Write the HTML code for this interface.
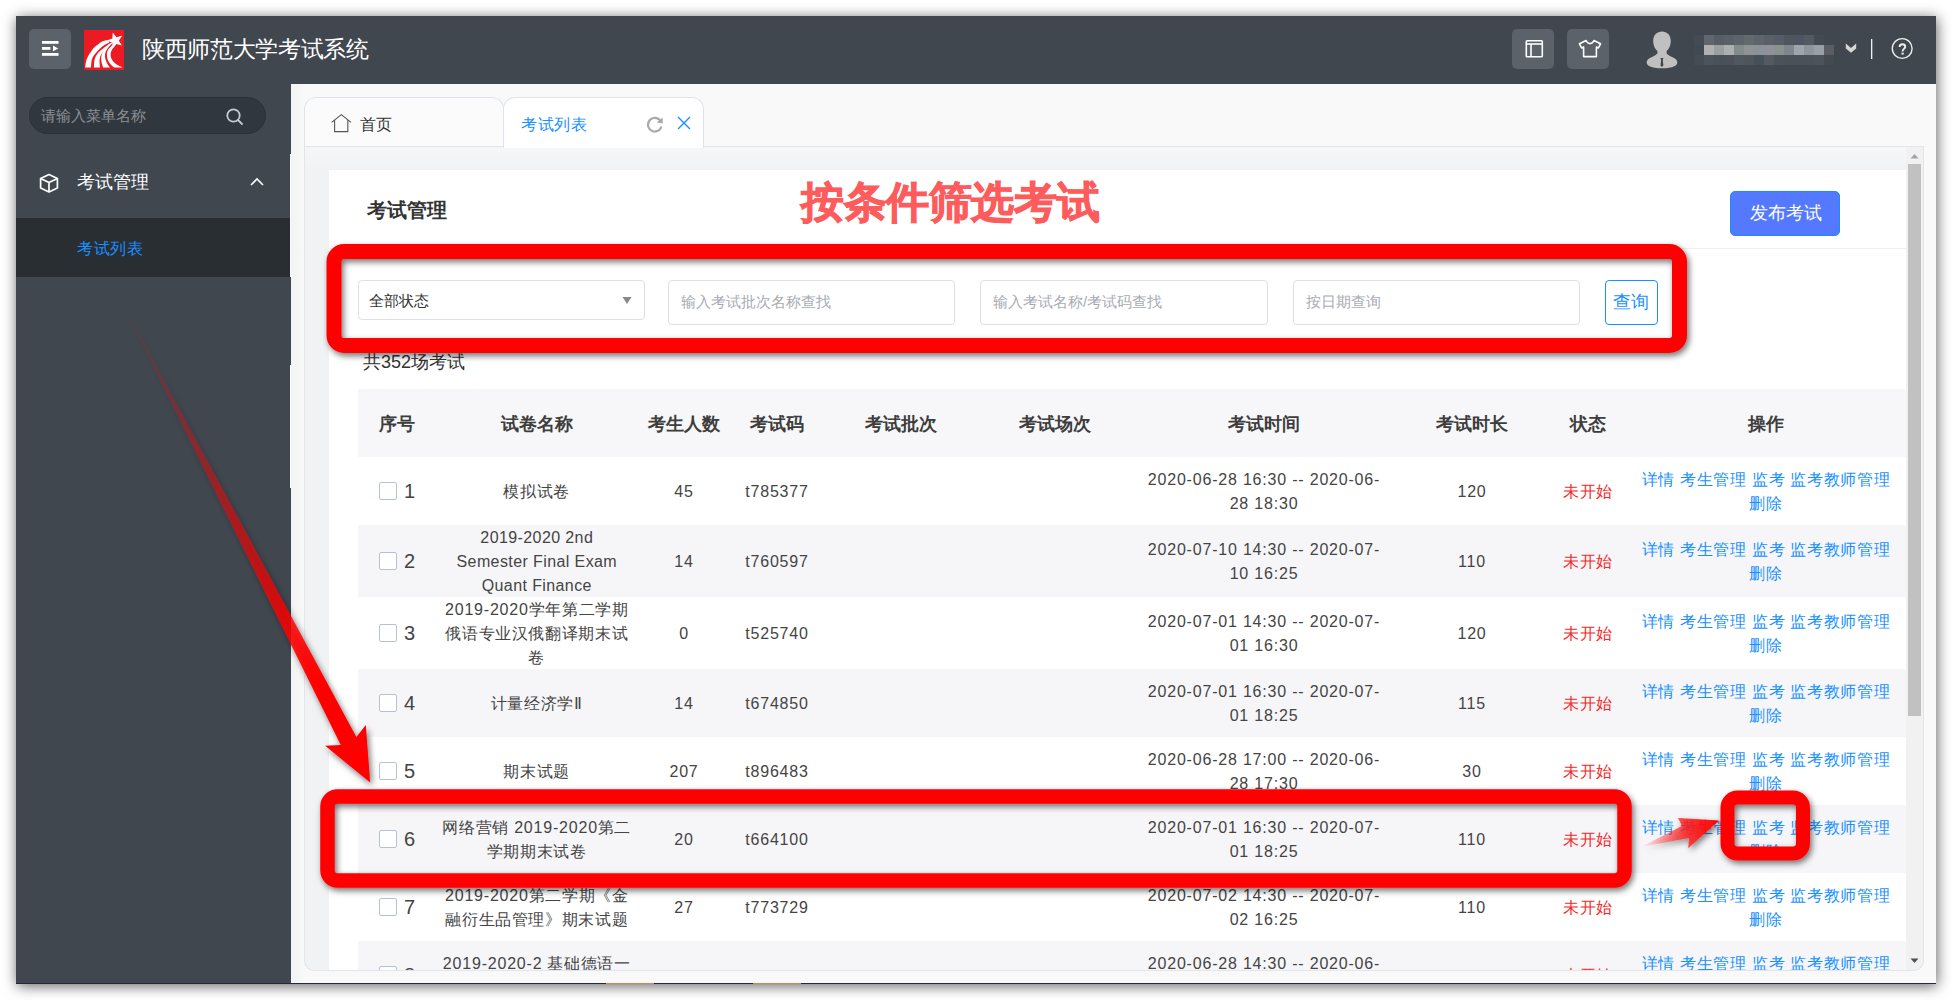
<!DOCTYPE html><html><head><meta charset="utf-8"><title>考试列表</title><style>
*{box-sizing:border-box}
html,body{margin:0;padding:0}
body{width:1952px;height:1000px;background:#fff;position:relative;overflow:hidden;font-family:"Liberation Sans",sans-serif;color:#333}
.a{position:absolute}
#win{left:16px;top:16px;width:1920px;height:968px;background:#f9f9fa;box-shadow:1px 2px 13px rgba(0,0,0,.62)}
#hdr{left:16px;top:16px;width:1920px;height:68px;background:#40474f}
#side{left:16px;top:84px;width:274px;height:899px;background:#40474f}
.hbtn{background:#5b626a;border-radius:5px;width:42px;height:40px;top:29px}
.ttl{left:142px;top:31px;font-size:23px;letter-spacing:-.35px;color:#fff;line-height:36px;white-space:nowrap}
.srch{left:29px;top:97px;width:237px;height:37px;border-radius:19px;background:#31373e;border:1px solid #2c3137}
.ph{color:#8a8f95;font-size:15px;white-space:nowrap}
.tabbox{left:304px;top:146px;width:1620px;height:825px;background:linear-gradient(#f6f7f8,#f1f2f4 26px);border:1px solid #e2e5ec;border-top:none;border-radius:0 0 10px 10px}
.tab{top:97px;height:50px;border:1px solid #dfe3ec;border-bottom:none;border-radius:12px 12px 0 0}
.card{left:329px;top:170px;width:1577px;height:800px;background:#fff}
.inp{top:280px;height:45px;background:#fff;border:1px solid #dcdfe6;border-radius:4px}
.cell{position:absolute;text-align:center;line-height:24px;font-size:16px;letter-spacing:.65px;color:#444;white-space:nowrap}
.num{font-size:16px;letter-spacing:.8px}
.en{font-size:16px;letter-spacing:.4px}
.hd{position:absolute;font-size:18px;font-weight:bold;color:#3d3d3d;white-space:nowrap;line-height:24px}
.cb{position:absolute;width:18px;height:18px;border:1px solid #b8c0d3;border-radius:2px;background:#fff}
.lk{color:#1890ff}
.red{color:#f22b2b}
</style></head><body>
<div id="win" class="a"></div>
<div id="hdr" class="a"></div>
<div id="side" class="a"></div>
<div class="a hbtn" style="left:29px"></div>
<svg class="a" style="left:29px;top:29px" width="42" height="40"><g fill="#fff"><rect x="13" y="12" width="16.5" height="2.8"/><rect x="13" y="18" width="8.4" height="2.8"/><path d="M24 16.6 L29.2 19.4 L24 22.2Z"/><rect x="13" y="24" width="16.5" height="2.8"/></g></svg>
<svg class="a" style="left:84px;top:30px" width="40" height="40" viewBox="0 0 40 40">
<rect width="40" height="40" fill="#ec1a22"/>
<g fill="#fff">
<path d="M28.80 2.61 L32.41 7.19 L38.06 5.79 L34.84 10.64 L37.94 15.58 L32.32 14.03 L28.60 18.52 L28.32 12.70 L22.89 10.57 L28.33 8.48Z"/>
<path d="M1.10 37.60 C1.40 36.13 1.73 31.73 2.90 28.80 C4.07 25.87 6.50 22.20 8.10 20.00 C9.70 17.80 10.73 17.07 12.50 15.60 C14.27 14.13 16.65 12.13 18.70 11.20 C20.75 10.27 23.78 10.20 24.80 10.00 L25.20 12.60 C24.05 13.25 20.42 14.90 18.30 16.50 C16.18 18.10 14.20 20.15 12.50 22.20 C10.80 24.25 9.02 26.23 8.10 28.80 C7.18 31.37 7.18 36.13 7.00 37.60Z"/>
<path d="M9.90 37.60 C10.05 36.13 10.00 31.37 10.80 28.80 C11.60 26.23 13.02 24.18 14.70 22.20 C16.38 20.22 18.98 18.37 20.90 16.90 C22.82 15.43 25.32 13.98 26.20 13.40 L27.20 14.60 C26.52 15.13 24.67 16.32 23.10 17.80 C21.53 19.28 19.05 21.52 17.80 23.50 C16.55 25.48 15.90 27.35 15.60 29.70 C15.30 32.05 15.93 36.28 16.00 37.60Z"/>
<path d="M19.10 37.60 C18.80 36.50 17.55 33.10 17.30 31.00 C17.05 28.90 17.15 26.85 17.60 25.00 C18.05 23.15 18.95 21.55 20.00 19.90 C21.05 18.25 22.67 16.32 23.90 15.10 C25.13 13.88 26.82 13.02 27.40 12.60 L28.30 13.60 C27.72 14.15 25.88 15.60 24.80 16.90 C23.72 18.20 22.43 19.80 21.80 21.40 C21.17 23.00 20.85 24.65 21.00 26.50 C21.15 28.35 21.87 30.65 22.70 32.50 C23.53 34.35 25.45 36.75 26.00 37.60Z"/>
<path d="M30.20 37.60 C29.35 36.75 26.30 34.35 25.10 32.50 C23.90 30.65 23.30 28.35 23.00 26.50 C22.70 24.65 22.80 22.90 23.30 21.40 C23.80 19.90 25.05 18.60 26.00 17.50 C26.95 16.40 28.50 15.25 29.00 14.80 L32.30 14.20 C31.65 15.00 29.35 17.30 28.40 19.00 C27.45 20.70 26.65 22.60 26.60 24.40 C26.55 26.20 27.20 28.20 28.10 29.80 C29.00 31.40 30.28 32.73 32.00 34.00 C33.72 35.27 37.33 36.83 38.40 37.40Z"/>
</g></svg>
<div class="a ttl">陕西师范大学考试系统</div>
<div class="a hbtn" style="left:1512px"></div>
<svg class="a" style="left:1512px;top:29px" width="42" height="40"><g fill="none" stroke="#fff" stroke-width="1.6"><rect x="14.3" y="11.8" width="16" height="16" rx="0.8"/><line x1="14.3" y1="15" x2="30.3" y2="15"/><line x1="19" y1="15" x2="19" y2="27.8"/></g></svg>
<div class="a hbtn" style="left:1567px"></div>
<svg class="a" style="left:1568.5px;top:29px" width="42" height="40"><path d="M17 11.5 C18 13.5 19.5 14.6 21 14.6 C22.5 14.6 24 13.5 25 11.5 L31.5 14.8 L29.4 19 L27.4 18 L27.4 27.6 L14.6 27.6 L14.6 18 L12.6 19 L10.5 14.8Z" fill="none" stroke="#fff" stroke-width="1.6" stroke-linejoin="round"/></svg>
<svg class="a" style="left:1645px;top:30px" width="34" height="40" viewBox="0 0 34 40"><path fill="#c0c0c0" d="M17 1.5 C22 1.5 25.8 5 25.8 11 C25.8 15.5 24 19 21.6 21 L21.6 23.5 C23 25 25 26.2 27 27 C31 28.5 32.3 30.5 32.3 32.5 C32.3 35.5 28 38.3 17 38.3 C6 38.3 1.7 35.5 1.7 32.5 C1.7 30.5 3 28.5 7 27 C9 26.2 11 25 12.4 23.5 L12.4 21 C10 19 8.2 15.5 8.2 11 C8.2 5 12 1.5 17 1.5Z"/><path fill="#40474f" d="M15.3 28 L18.5 28 L17.8 30 L18.4 35.6 L16.9 37 L15.5 35.6 L16.1 30Z"/></svg>
<div class="a" style="left:1694px;top:35px;width:10px;height:10px;background:#444b53"></div>
<div class="a" style="left:1704px;top:35px;width:10px;height:10px;background:#5f666e"></div>
<div class="a" style="left:1714px;top:35px;width:10px;height:10px;background:#575d66"></div>
<div class="a" style="left:1724px;top:35px;width:10px;height:10px;background:#5a6068"></div>
<div class="a" style="left:1734px;top:35px;width:10px;height:10px;background:#5d646c"></div>
<div class="a" style="left:1744px;top:35px;width:10px;height:10px;background:#626a6e"></div>
<div class="a" style="left:1754px;top:35px;width:10px;height:10px;background:#5e636c"></div>
<div class="a" style="left:1764px;top:35px;width:10px;height:10px;background:#5a5f68"></div>
<div class="a" style="left:1774px;top:35px;width:10px;height:10px;background:#575d66"></div>
<div class="a" style="left:1784px;top:35px;width:10px;height:10px;background:#4f565e"></div>
<div class="a" style="left:1794px;top:35px;width:10px;height:10px;background:#4e5560"></div>
<div class="a" style="left:1804px;top:35px;width:10px;height:10px;background:#535a62"></div>
<div class="a" style="left:1814px;top:35px;width:10px;height:10px;background:#434a52"></div>
<div class="a" style="left:1824px;top:35px;width:10px;height:10px;background:#40474f"></div>
<div class="a" style="left:1694px;top:45px;width:10px;height:10px;background:#3f4a55"></div>
<div class="a" style="left:1704px;top:45px;width:10px;height:10px;background:#b0b0b0"></div>
<div class="a" style="left:1714px;top:45px;width:10px;height:10px;background:#9aa0a0"></div>
<div class="a" style="left:1724px;top:45px;width:10px;height:10px;background:#adb0b2"></div>
<div class="a" style="left:1734px;top:45px;width:10px;height:10px;background:#838b8b"></div>
<div class="a" style="left:1744px;top:45px;width:10px;height:10px;background:#8e9393"></div>
<div class="a" style="left:1754px;top:45px;width:10px;height:10px;background:#8c9299"></div>
<div class="a" style="left:1764px;top:45px;width:10px;height:10px;background:#90909a"></div>
<div class="a" style="left:1774px;top:45px;width:10px;height:10px;background:#8b918f"></div>
<div class="a" style="left:1784px;top:45px;width:10px;height:10px;background:#7f878d"></div>
<div class="a" style="left:1794px;top:45px;width:10px;height:10px;background:#a0a4ac"></div>
<div class="a" style="left:1804px;top:45px;width:10px;height:10px;background:#8f959c"></div>
<div class="a" style="left:1814px;top:45px;width:10px;height:10px;background:#9a9ea8"></div>
<div class="a" style="left:1824px;top:45px;width:10px;height:10px;background:#5a5e62"></div>
<div class="a" style="left:1694px;top:55px;width:10px;height:10px;background:#454c53"></div>
<div class="a" style="left:1704px;top:55px;width:10px;height:10px;background:#4c535b"></div>
<div class="a" style="left:1714px;top:55px;width:10px;height:10px;background:#4a5058"></div>
<div class="a" style="left:1724px;top:55px;width:10px;height:10px;background:#4a5159"></div>
<div class="a" style="left:1734px;top:55px;width:10px;height:10px;background:#50575e"></div>
<div class="a" style="left:1744px;top:55px;width:10px;height:10px;background:#4f5659"></div>
<div class="a" style="left:1754px;top:55px;width:10px;height:10px;background:#475057"></div>
<div class="a" style="left:1764px;top:55px;width:10px;height:10px;background:#535a62"></div>
<div class="a" style="left:1774px;top:55px;width:10px;height:10px;background:#4b5259"></div>
<div class="a" style="left:1784px;top:55px;width:10px;height:10px;background:#4a5158"></div>
<div class="a" style="left:1794px;top:55px;width:10px;height:10px;background:#4a5159"></div>
<div class="a" style="left:1804px;top:55px;width:10px;height:10px;background:#4a5159"></div>
<div class="a" style="left:1814px;top:55px;width:10px;height:10px;background:#4c535b"></div>
<div class="a" style="left:1824px;top:55px;width:10px;height:10px;background:#434a52"></div>
<svg class="a" style="left:1843px;top:41px" width="16" height="14"><path d="M2.8 2.6 L8 7 L13.2 2.6 L13.2 7.4 L8 11.8 L2.8 7.4Z" fill="#d6d6d6"/></svg>
<div class="a" style="left:1871px;top:39px;width:1px;height:20px;background:#f0f0f0"></div><div class="a" style="left:1872px;top:39px;width:1px;height:20px;background:rgba(230,230,230,.35)"></div>
<svg class="a" style="left:1890px;top:37px" width="24" height="24"><circle cx="12.2" cy="11.5" r="9.9" fill="none" stroke="#eee" stroke-width="1.4"/><path d="M9.6 10 C9.6 8.2 10.9 7.3 12.4 7.3 C14 7.3 15.2 8.4 15.2 9.8 C15.2 11.8 12.6 12 12.6 14.2 L12.6 14.6" fill="none" stroke="#eee" stroke-width="1.9"/><rect x="11.5" y="15.6" width="2.2" height="2" fill="#eee"/></svg>
<div class="a" style="left:290px;top:84px;width:1px;height:70px;background:#40474f"></div>
<div class="a" style="left:290px;top:277px;width:1px;height:88px;background:#40474f"></div>
<div class="a" style="left:290px;top:488px;width:1px;height:495px;background:#40474f"></div>
<div class="a srch"></div>
<div class="a ph" style="left:41px;top:106px;line-height:20px;font-size:15px">请输入菜单名称</div>
<svg class="a" style="left:224px;top:106px" width="20" height="20"><circle cx="9.5" cy="9.5" r="6.2" fill="none" stroke="#c5cad3" stroke-width="1.8"/><line x1="14" y1="14" x2="18" y2="18" stroke="#c5cad3" stroke-width="1.8" stroke-linecap="round"/></svg>
<svg class="a" style="left:38px;top:172px" width="22" height="22"><g fill="none" stroke="#fff" stroke-width="1.7" stroke-linejoin="round"><path d="M11 2.6 L19.4 6.6 L19.4 16 L11 20 L2.6 16 L2.6 6.6Z"/><path d="M2.6 6.6 L11 10.6 L19.4 6.6 M11 10.6 L11 20"/></g></svg>
<div class="a" style="left:77px;top:170px;font-size:18px;line-height:24px;color:#fff;white-space:nowrap">考试管理</div>
<svg class="a" style="left:248px;top:175px" width="18" height="14"><path d="M3 10 L9 4 L15 10" fill="none" stroke="#fff" stroke-width="1.6"/></svg>
<div class="a" style="left:16px;top:218px;width:274px;height:59px;background:#292e33"></div>
<div class="a" style="left:77px;top:237px;font-size:16px;letter-spacing:.7px;line-height:24px;color:#1890ff;white-space:nowrap">考试列表</div>
<div class="a" style="left:291px;top:84px;width:13px;height:899px;background:linear-gradient(90deg,#f2f3f3,#f7f8f8)"></div>
<div class="a tabbox"></div>
<div class="a" style="left:304px;top:146px;width:1619px;height:1px;background:#e2e5ec"></div>
<div class="a tab" style="left:304px;width:200px;height:49px;background:#fbfbfc"></div>
<div class="a tab" style="left:503px;width:201px;background:#fff;height:51px"></div>
<svg class="a" style="left:329px;top:112px" width="24" height="22"><path d="M2.6 10.4 L12.3 2.6 L22 10.4 M5.6 8.2 L5.6 19.6 L18.8 19.6 L18.8 8.2" fill="none" stroke="#555" stroke-width="1.1"/></svg>
<div class="a" style="left:360px;top:113px;font-size:16px;line-height:24px;color:#333">首页</div>
<div class="a" style="left:521px;top:113px;font-size:16px;letter-spacing:.5px;line-height:24px;color:#1890ff">考试列表</div>
<svg class="a" style="left:645px;top:114px" width="20" height="20"><path d="M16.2 8.4 A6.8 6.8 0 1 0 16.4 12.4" fill="none" stroke="#aaa" stroke-width="2.2"/><path d="M17.6 3.4 L17.8 9.6 L11.8 8.6Z" fill="#aaa"/></svg>
<svg class="a" style="left:676px;top:115px" width="16" height="16"><path d="M2 2 L14 14 M14 2 L2 14" stroke="#1890ff" stroke-width="1.4"/></svg>
<div class="a card"></div>
<div class="a" style="left:367px;top:197px;font-size:20px;line-height:26px;font-weight:bold;color:#333">考试管理</div>
<div class="a" style="left:329px;top:248px;width:1577px;height:1px;background:#f0f0f2"></div>
<div class="a" style="left:1730px;top:191px;width:110px;height:45px;background:#5479ff;border:1px solid #1a8cff;border-radius:5px"></div>
<div class="a" style="left:1750px;top:201px;font-size:18px;line-height:24px;color:#fff;white-space:nowrap">发布考试</div>
<div class="a inp" style="left:358px;width:287px;height:40px"></div>
<div class="a" style="left:369px;top:291px;font-size:15px;line-height:20px;color:#333;white-space:nowrap">全部状态</div>
<svg class="a" style="left:621px;top:295px" width="12" height="10"><path d="M1.5 2 L10.5 2 L6 9Z" fill="#888"/></svg>
<div class="a inp" style="left:668px;width:287px"></div>
<div class="a ph" style="left:681px;top:292px;line-height:20px;color:#a8abb2">输入考试批次名称查找</div>
<div class="a inp" style="left:980px;width:288px"></div>
<div class="a ph" style="left:993px;top:292px;line-height:20px;color:#a8abb2">输入考试名称/考试码查找</div>
<div class="a inp" style="left:1293px;width:287px"></div>
<div class="a ph" style="left:1306px;top:292px;line-height:20px;color:#a8abb2">按日期查询</div>
<div class="a" style="left:1605px;top:280px;width:53px;height:45px;border:1px solid #1890ff;border-radius:4px;background:#fff"></div>
<div class="a" style="left:1613px;top:290px;font-size:18px;line-height:24px;color:#1890ff;white-space:nowrap">查询</div>
<div class="a" style="left:363px;top:350px;font-size:18px;line-height:24px;color:#333;white-space:nowrap">共352场考试</div>
<div class="a" style="left:358px;top:389px;width:1548px;height:68px;background:#f7f7f9"></div>
<div class="hd" style="left:379px;top:412px">序号</div>
<div class="hd" style="left:436.79999999999995px;width:200px;text-align:center;top:412px">试卷名称</div>
<div class="hd" style="left:584px;width:200px;text-align:center;top:412px">考生人数</div>
<div class="hd" style="left:677px;width:200px;text-align:center;top:412px">考试码</div>
<div class="hd" style="left:801px;width:200px;text-align:center;top:412px">考试批次</div>
<div class="hd" style="left:955px;width:200px;text-align:center;top:412px">考试场次</div>
<div class="hd" style="left:1164px;width:200px;text-align:center;top:412px">考试时间</div>
<div class="hd" style="left:1372px;width:200px;text-align:center;top:412px">考试时长</div>
<div class="hd" style="left:1488px;width:200px;text-align:center;top:412px">状态</div>
<div class="hd" style="left:1666px;width:200px;text-align:center;top:412px">操作</div>
<div class="a" style="left:304px;top:457px;width:1619px;height:513px;overflow:hidden">
<div class="a" style="left:54px;top:0px;width:1548px;height:68px;background:#fff"></div>
<div class="cb" style="left:75px;top:25.0px"></div>
<div class="cell" style="left:100px;top:22.0px;font-size:20px;text-align:left;letter-spacing:0">1</div>
<div class="cell" style="left:122.79999999999995px;width:220px;top:23.0px">模拟试卷</div>
<div class="cell num" style="left:340px;width:80px;top:23.0px">45</div>
<div class="cell num" style="left:423px;width:100px;top:23.0px">t785377</div>
<div class="cell num" style="left:820px;width:280px;top:11.0px">2020-06-28 16:30 -- 2020-06-<br>28 18:30</div>
<div class="cell num" style="left:1128px;width:80px;top:23.0px">120</div>
<div class="cell red" style="left:1244px;width:80px;top:23.0px">未开始</div>
<div class="cell lk" style="left:1322px;width:280px;top:11.0px">详情 考生管理 监考 监考教师管理<br>删除</div>
<div class="a" style="left:54px;top:68px;width:1548px;height:72px;background:#f6f6f9"></div>
<div class="cb" style="left:75px;top:95.0px"></div>
<div class="cell" style="left:100px;top:92.0px;font-size:20px;text-align:left;letter-spacing:0">2</div>
<div class="cell" style="left:122.79999999999995px;width:220px;top:69.0px"><span class="en">2019-2020 2nd</span><br><span class="en">Semester Final Exam</span><br><span class="en">Quant Finance</span></div>
<div class="cell num" style="left:340px;width:80px;top:93.0px">14</div>
<div class="cell num" style="left:423px;width:100px;top:93.0px">t760597</div>
<div class="cell num" style="left:820px;width:280px;top:81.0px">2020-07-10 14:30 -- 2020-07-<br>10 16:25</div>
<div class="cell num" style="left:1128px;width:80px;top:93.0px">110</div>
<div class="cell red" style="left:1244px;width:80px;top:93.0px">未开始</div>
<div class="cell lk" style="left:1322px;width:280px;top:81.0px">详情 考生管理 监考 监考教师管理<br>删除</div>
<div class="a" style="left:54px;top:140px;width:1548px;height:72px;background:#fff"></div>
<div class="cb" style="left:75px;top:167.0px"></div>
<div class="cell" style="left:100px;top:164.0px;font-size:20px;text-align:left;letter-spacing:0">3</div>
<div class="cell" style="left:122.79999999999995px;width:220px;top:141.0px"><span class="num">2019-2020</span>学年第二学期<br>俄语专业汉俄翻译期末试<br>卷</div>
<div class="cell num" style="left:340px;width:80px;top:165.0px">0</div>
<div class="cell num" style="left:423px;width:100px;top:165.0px">t525740</div>
<div class="cell num" style="left:820px;width:280px;top:153.0px">2020-07-01 14:30 -- 2020-07-<br>01 16:30</div>
<div class="cell num" style="left:1128px;width:80px;top:165.0px">120</div>
<div class="cell red" style="left:1244px;width:80px;top:165.0px">未开始</div>
<div class="cell lk" style="left:1322px;width:280px;top:153.0px">详情 考生管理 监考 监考教师管理<br>删除</div>
<div class="a" style="left:54px;top:212px;width:1548px;height:68px;background:#f6f6f9"></div>
<div class="cb" style="left:75px;top:237.0px"></div>
<div class="cell" style="left:100px;top:234.0px;font-size:20px;text-align:left;letter-spacing:0">4</div>
<div class="cell" style="left:122.79999999999995px;width:220px;top:235.0px">计量经济学Ⅱ</div>
<div class="cell num" style="left:340px;width:80px;top:235.0px">14</div>
<div class="cell num" style="left:423px;width:100px;top:235.0px">t674850</div>
<div class="cell num" style="left:820px;width:280px;top:223.0px">2020-07-01 16:30 -- 2020-07-<br>01 18:25</div>
<div class="cell num" style="left:1128px;width:80px;top:235.0px">115</div>
<div class="cell red" style="left:1244px;width:80px;top:235.0px">未开始</div>
<div class="cell lk" style="left:1322px;width:280px;top:223.0px">详情 考生管理 监考 监考教师管理<br>删除</div>
<div class="a" style="left:54px;top:280px;width:1548px;height:68px;background:#fff"></div>
<div class="cb" style="left:75px;top:305.0px"></div>
<div class="cell" style="left:100px;top:302.0px;font-size:20px;text-align:left;letter-spacing:0">5</div>
<div class="cell" style="left:122.79999999999995px;width:220px;top:303.0px">期末试题</div>
<div class="cell num" style="left:340px;width:80px;top:303.0px">207</div>
<div class="cell num" style="left:423px;width:100px;top:303.0px">t896483</div>
<div class="cell num" style="left:820px;width:280px;top:291.0px">2020-06-28 17:00 -- 2020-06-<br>28 17:30</div>
<div class="cell num" style="left:1128px;width:80px;top:303.0px">30</div>
<div class="cell red" style="left:1244px;width:80px;top:303.0px">未开始</div>
<div class="cell lk" style="left:1322px;width:280px;top:291.0px">详情 考生管理 监考 监考教师管理<br>删除</div>
<div class="a" style="left:54px;top:348px;width:1548px;height:68px;background:#f6f6f9"></div>
<div class="cb" style="left:75px;top:373.0px"></div>
<div class="cell" style="left:100px;top:370.0px;font-size:20px;text-align:left;letter-spacing:0">6</div>
<div class="cell" style="left:122.79999999999995px;width:220px;top:359.0px">网络营销 <span class="num">2019-2020</span>第二<br>学期期末试卷</div>
<div class="cell num" style="left:340px;width:80px;top:371.0px">20</div>
<div class="cell num" style="left:423px;width:100px;top:371.0px">t664100</div>
<div class="cell num" style="left:820px;width:280px;top:359.0px">2020-07-01 16:30 -- 2020-07-<br>01 18:25</div>
<div class="cell num" style="left:1128px;width:80px;top:371.0px">110</div>
<div class="cell red" style="left:1244px;width:80px;top:371.0px">未开始</div>
<div class="cell lk" style="left:1322px;width:280px;top:359.0px">详情 考生管理 监考 监考教师管理<br>删除</div>
<div class="a" style="left:54px;top:416px;width:1548px;height:68px;background:#fff"></div>
<div class="cb" style="left:75px;top:441.0px"></div>
<div class="cell" style="left:100px;top:438.0px;font-size:20px;text-align:left;letter-spacing:0">7</div>
<div class="cell" style="left:122.79999999999995px;width:220px;top:427.0px"><span class="num">2019-2020</span>第二学期《金<br>融衍生品管理》期末试题</div>
<div class="cell num" style="left:340px;width:80px;top:439.0px">27</div>
<div class="cell num" style="left:423px;width:100px;top:439.0px">t773729</div>
<div class="cell num" style="left:820px;width:280px;top:427.0px">2020-07-02 14:30 -- 2020-07-<br>02 16:25</div>
<div class="cell num" style="left:1128px;width:80px;top:439.0px">110</div>
<div class="cell red" style="left:1244px;width:80px;top:439.0px">未开始</div>
<div class="cell lk" style="left:1322px;width:280px;top:427.0px">详情 考生管理 监考 监考教师管理<br>删除</div>
<div class="a" style="left:54px;top:484px;width:1548px;height:68px;background:#f6f6f9"></div>
<div class="cb" style="left:75px;top:509.0px"></div>
<div class="cell" style="left:100px;top:506.0px;font-size:20px;text-align:left;letter-spacing:0">8</div>
<div class="cell" style="left:122.79999999999995px;width:220px;top:495.0px"><span class="num">2019-2020-2</span> 基础德语一<br>期末考试</div>
<div class="cell num" style="left:820px;width:280px;top:495.0px">2020-06-28 14:30 -- 2020-06-<br>28 16:30</div>
<div class="cell red" style="left:1244px;width:80px;top:507.0px">未开始</div>
<div class="cell lk" style="left:1322px;width:280px;top:495.0px">详情 考生管理 监考 监考教师管理<br>删除</div>
</div>
<div class="a" style="left:1906px;top:147px;width:17px;height:813px;background:#f1f1f1"></div>
<div class="a" style="left:1908px;top:164px;width:13px;height:552px;background:#c1c1c1"></div>
<svg class="a" style="left:1906px;top:150px" width="17" height="12"><path d="M4.5 8.5 L12.5 8.5 L8.5 4Z" fill="#a3a3a3"/></svg>
<svg class="a" style="left:1906px;top:955px" width="17" height="12"><path d="M4.5 3.5 L12.5 3.5 L8.5 8Z" fill="#505050"/></svg>
<div class="a" style="left:16px;top:983px;width:1920px;height:1px;background:#23283a"></div>
<div class="a" style="left:606px;top:983px;width:48px;height:1px;background:#c98a5a"></div>
<div class="a" style="left:753px;top:983px;width:48px;height:1px;background:#c98a5a"></div>
<div class="a" style="left:801px;top:173px;font-size:43px;line-height:58px;font-weight:bold;color:#fe5c5c;-webkit-text-stroke:1px #fe5c5c;letter-spacing:-.4px;white-space:nowrap">按条件筛选考试</div>
<svg class="a" style="left:0;top:0" width="1952" height="1000">
<defs>
<filter id="sh" x="-20%" y="-20%" width="140%" height="140%"><feDropShadow dx="2" dy="3" stdDeviation="3" flood-color="#000" flood-opacity=".55"/></filter>
<linearGradient id="g1" gradientUnits="userSpaceOnUse" x1="115.5" y1="290.5" x2="370" y2="783"><stop offset="0" stop-color="#ff0000" stop-opacity="0"/><stop offset=".55" stop-color="#ff0000" stop-opacity=".6"/><stop offset=".8" stop-color="#ff0000" stop-opacity="1"/></linearGradient>
<linearGradient id="g2" gradientUnits="userSpaceOnUse" x1="1641" y1="847" x2="1719" y2="820"><stop offset="0" stop-color="#ff2020" stop-opacity="0"/><stop offset=".6" stop-color="#ff2020" stop-opacity=".85"/><stop offset="1" stop-color="#ff0000" stop-opacity="1"/></linearGradient>
</defs>
<g filter="url(#sh)">
<rect x="334" y="251.5" width="1345.5" height="94" rx="10" fill="none" stroke="#ff0000" stroke-width="15"/>
<rect x="327.5" y="796.5" width="1297" height="84" rx="10" fill="none" stroke="#ff0000" stroke-width="14.5"/>
<rect x="1727.5" y="797.5" width="75.5" height="56" rx="10" fill="none" stroke="#ff0000" stroke-width="14"/>
<path d="M115.5 290.5 L356.4 737 L365.8 725 L370.2 782.6 L325.2 745.8 L340.8 745 Z" fill="url(#g1)"/>
<path d="M1641 847 L1682 826 L1678 818 L1719 820.4 L1688.2 848.3 L1689 838 Z" fill="url(#g2)"/>
</g>
</svg>
</body></html>
